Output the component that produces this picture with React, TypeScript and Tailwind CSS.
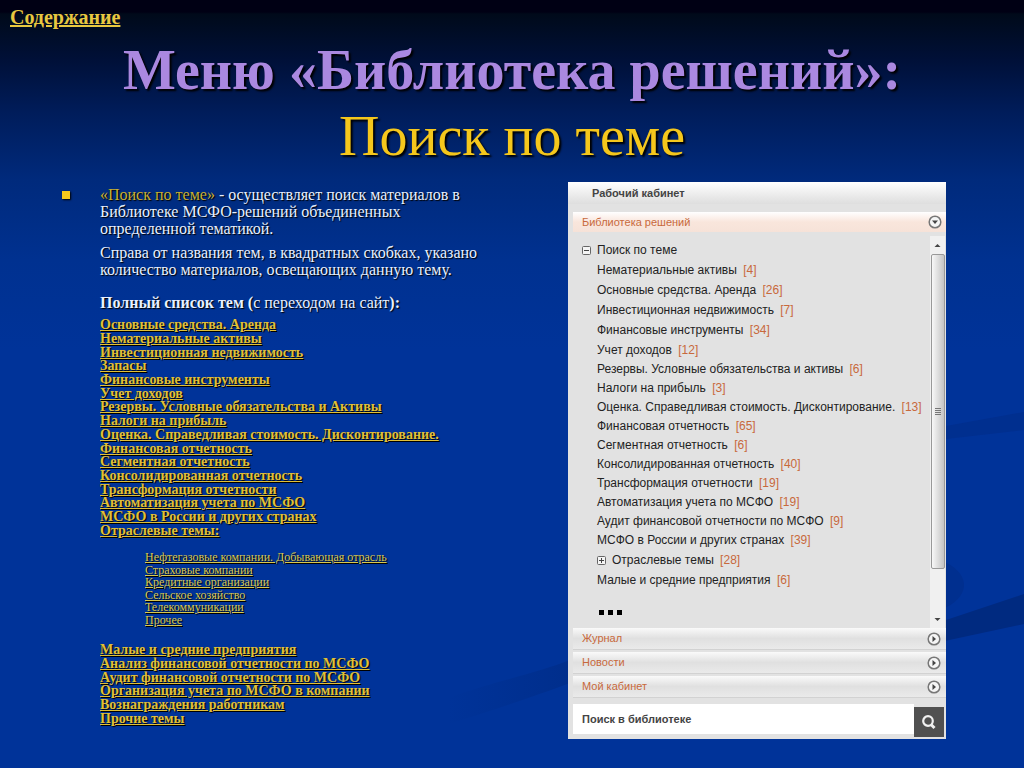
const topics = [
  'Основные средства. Аренда',
  'Нематериальные активы',
  'Инвестиционная недвижимость',
  'Запасы',
  'Финансовые инструменты',
  'Учет доходов',
  'Резервы. Условные обязательства и Активы',
  'Налоги на прибыль',
  'Оценка. Справедливая стоимость. Дисконтирование.',
  'Финансовая отчетность',
  'Сегментная отчетность',
  'Консолидированная отчетность',
  'Трансформация отчетности',
  'Автоматизация учета по МСФО',
  'МСФО в России и других странах',
  'Отраслевые темы:',
]

const industries = [
  'Нефтегазовые компании. Добывающая отрасль',
  'Страховые компании',
  'Кредитные организации',
  'Сельское хозяйство',
  'Телекоммуникации',
  'Прочее',
]

const otherTopics = [
  'Малые и средние предприятия',
  'Анализ финансовой отчетности по МСФО',
  'Аудит финансовой отчетности по МСФО',
  'Организация учета по МСФО в компании',
  'Вознаграждения работникам',
  'Прочие темы',
]

type TreeRow = { name: string; count: number }

const treeTop: TreeRow[] = [
  { name: 'Нематериальные активы', count: 4 },
  { name: 'Основные средства. Аренда', count: 26 },
  { name: 'Инвестиционная недвижимость', count: 7 },
  { name: 'Финансовые инструменты', count: 34 },
  { name: 'Учет доходов', count: 12 },
]

const treeMiddle: TreeRow[] = [
  { name: 'Резервы. Условные обязательства и активы', count: 6 },
  { name: 'Налоги на прибыль', count: 3 },
  { name: 'Оценка. Справедливая стоимость. Дисконтирование.', count: 13 },
  { name: 'Финансовая отчетность', count: 65 },
  { name: 'Сегментная отчетность', count: 6 },
  { name: 'Консолидированная отчетность', count: 40 },
  { name: 'Трансформация отчетности', count: 19 },
  { name: 'Автоматизация учета по МСФО', count: 19 },
  { name: 'Аудит финансовой отчетности по МСФО', count: 9 },
  { name: 'МСФО в России и других странах', count: 39 },
]

const sections = ['Журнал', 'Новости', 'Мой кабинет']

function Links({ items, className }: { items: string[]; className: string }) {
  return (
    <ul className={className}>
      {items.map((item) => (
        <li key={item} className="flex items-center">
          <a href="#" className="underline whitespace-nowrap">
            {item}
          </a>
        </li>
      ))}
    </ul>
  )
}

function Count({ value }: { value: number }) {
  return <span className="ml-[3px] text-[#c8693c]">[{value}]</span>
}

function TreeItems({ rows, className }: { rows: TreeRow[]; className: string }) {
  return (
    <ul className={className}>
      {rows.map((row) => (
        <li key={row.name} className="whitespace-nowrap">
          <a href="#">
            {row.name} <Count value={row.count} />
          </a>
        </li>
      ))}
    </ul>
  )
}

function TreeToggle({ open }: { open: boolean }) {
  return (
    <svg viewBox="0 0 9 9" className="size-[9px] shrink-0">
      <rect x="0.5" y="0.5" width="8" height="8" rx="1" fill="#f4f4f4" stroke="#666" />
      <path d={open ? 'M2 4.5h5' : 'M2 4.5h5M4.5 2v5'} stroke="#444" />
    </svg>
  )
}

function CircleArrow({ down }: { down?: boolean }) {
  return (
    <svg viewBox="0 0 14 14" className="size-3.5">
      <circle cx="7" cy="7" r="5.8" fill="#f5f5f5" stroke="#777" strokeWidth="1.5" />
      <path d={down ? 'M4 5.5h6L7 9z' : 'M5.5 4v6L9 7z'} fill="#444" />
    </svg>
  )
}

function Swirls() {
  return (
    <svg
      viewBox="0 0 1024 768"
      preserveAspectRatio="none"
      className="absolute inset-0 size-full"
      aria-hidden="true"
    >
      <defs>
        <linearGradient id="tail" x1="0" x2="1" y1="0" y2="0">
          <stop offset="0" stopColor="#003399" />
          <stop offset="1" stopColor="#002e8c" />
        </linearGradient>
      </defs>
      <path d="M946 426L1024 412V430L946 439z" fill="#002f8f" />
      <path d="M940 560C972 572 972 598 940 610z" fill="#002f8f" />
      <path d="M940 622L1024 594V624L940 642z" fill="#002a80" />
      <path d="M448 698C500 680 540 672 570 660V683C535 696 500 708 448 724z" fill="url(#tail)" />
    </svg>
  )
}

function Cabinet() {
  return (
    <section className="flex w-[378px] shrink-0 flex-col bg-[#e2e2e2] font-['Liberation_Sans',Arial,sans-serif] text-xs text-[#222]">
      <h2 className="h-[22px] bg-linear-to-b from-white to-[#dedede] pl-6 text-[11px] leading-[22px] font-bold text-[#444]">
        Рабочий кабинет
      </h2>
      <button
        type="button"
        className="mt-2 ml-[5px] flex h-5 items-center justify-between bg-linear-to-b from-white via-[#f9e6dc] to-[#f6e2d8] pr-1 pl-[9px] text-[11px] text-[#c8693c]"
      >
        Библиотека решений
        <CircleArrow down />
      </button>
      <div className="mt-1 flex h-[392px]">
        <div className="min-w-0 flex-1 pt-1 pl-[14px]">
          <div className="flex h-5 items-center gap-[6px]">
            <TreeToggle open />
            Поиск по теме
          </div>
          <TreeItems rows={treeTop} className="pl-[15px] leading-5" />
          <TreeItems rows={treeMiddle} className="pl-[15px] leading-[19px]" />
          <div className="flex h-5 items-center gap-[6px] pl-[15px]">
            <TreeToggle open={false} />
            <a href="#">
              Отраслевые темы <Count value={28} />
            </a>
          </div>
          <TreeItems rows={[{ name: 'Малые и средние предприятия', count: 6 }]} className="pl-[15px] leading-5" />
          <div className="mt-5 flex gap-1 pl-[17px]">
            <span className="size-[5px] bg-black" />
            <span className="size-[5px] bg-black" />
            <span className="size-[5px] bg-black" />
          </div>
        </div>
        <div className="mr-px flex w-[15px] flex-col items-center bg-[#f0f0f0]">
          <svg viewBox="0 0 15 18" className="h-[18px] w-[15px]">
            <path d="M4.5 11h6L7.5 8z" fill="#444" />
          </svg>
          <div className="flex h-[315px] w-[14px] flex-col items-center justify-center gap-px rounded-xs border border-[#999] bg-linear-to-r from-[#f8f8f8] to-[#c4c4c4]">
            <span className="h-px w-[6px] bg-[#777]" />
            <span className="h-px w-[6px] bg-[#777]" />
            <span className="h-px w-[6px] bg-[#777]" />
            <span className="h-px w-[6px] bg-[#777]" />
          </div>
          <svg viewBox="0 0 15 18" className="mt-auto h-[18px] w-[15px]">
            <path d="M4.5 8h6L7.5 11z" fill="#444" />
          </svg>
        </div>
      </div>
      <div className="flex flex-col gap-[2px] pl-[5px]">
        {sections.map((section) => (
          <button
            key={section}
            type="button"
            className="flex h-[22px] items-center justify-between border-b border-[#d2d2d2] bg-linear-to-b from-[#fafafa] via-[#e0e0e0] to-[#eaeaea] pr-[5px] pl-[9px] text-[11px] text-[#c8693c]"
          >
            {section}
            <CircleArrow />
          </button>
        ))}
      </div>
      <form className="mt-[6px] flex pr-[2px] pb-[2px] pl-[5px]">
        <input
          type="text"
          aria-label="Поиск в библиотеке"
          placeholder="Поиск в библиотеке"
          className="mb-[3px] h-[30px] min-w-0 flex-1 bg-white pl-[9px] text-[11px] font-bold placeholder:text-[#444]"
        />
        <button
          type="button"
          aria-label="Найти"
          className="mt-[3px] flex size-[30px] items-center justify-center bg-[#505050]"
        >
          <svg viewBox="0 0 16 16" className="size-4" fill="none" stroke="#f0f0f0">
            <circle cx="7" cy="7" r="4.8" strokeWidth="2.2" />
            <path d="M10 10.5L13.5 14" strokeWidth="3" />
          </svg>
        </button>
      </form>
    </section>
  )
}

export default function App() {
  return (
    <div className="relative min-h-screen bg-[#003399] bg-[linear-gradient(to_bottom,#000014_0,#000014_12px,#000a1a_14px,#001038_60px,#001d5c_115px,#002a7c_180px,#003190_260px,#003399_350px)] font-['Liberation_Serif','Times_New_Roman',serif]">
      <Swirls />
      <div className="relative">
        <header>
          <a
            href="#"
            className="ml-[10px] block w-fit pt-[6px] text-xl leading-[22px] font-bold text-[#e8c840] underline"
          >
            Содержание
          </a>
          <h1 className="mt-[9px] text-center text-[56px] leading-[66px] text-[#f5c71c] text-shadow-[2px_2px_2px_#000]">
            <span className="block font-bold text-[#aa88e0]">Меню «Библиотека решений»:</span>
            <span className="block">Поиск по теме</span>
          </h1>
        </header>
        <main className="mt-[13px] flex items-start justify-between pr-[78px] pl-[62px]">
          <div className="flex text-base text-[#e8f0ff] text-shadow-[1px_1px_1px_#000]">
            <span className="mt-[9px] size-2 shrink-0 bg-[#f5c71c] shadow-[1px_1px_2px_#000]" />
            <div className="ml-[30px] pt-1">
              <p className="leading-[17px]">
                <span className="text-[#c8b030]">«Поиск по теме»</span> - осуществляет поиск материалов в
                <br />
                Библиотеке МСФО-решений объединенных
                <br />
                определенной тематикой.
              </p>
              <p className="mt-[7px] leading-[17px]">
                Справа от названия тем, в квадратных скобках, указано
                <br />
                количество материалов, освещающих данную тему.
              </p>
              <h2 className="mt-4 leading-[17px]">
                <b>Полный список тем (</b>с переходом на сайт<b>):</b>
              </h2>
              <Links
                items={topics}
                className="mt-[7px] grid h-[219px] auto-rows-fr text-sm leading-[13px] font-bold text-[#e0c038]"
              />
              <Links
                items={industries}
                className="mt-[14px] ml-[45px] grid h-[75px] auto-rows-fr text-xs leading-3 text-[#d8c850]"
              />
              <Links
                items={otherTopics}
                className="mt-[17px] grid h-[82px] auto-rows-fr text-sm leading-[13px] font-bold text-[#e0c038]"
              />
            </div>
          </div>
          <Cabinet />
        </main>
      </div>
    </div>
  )
}
